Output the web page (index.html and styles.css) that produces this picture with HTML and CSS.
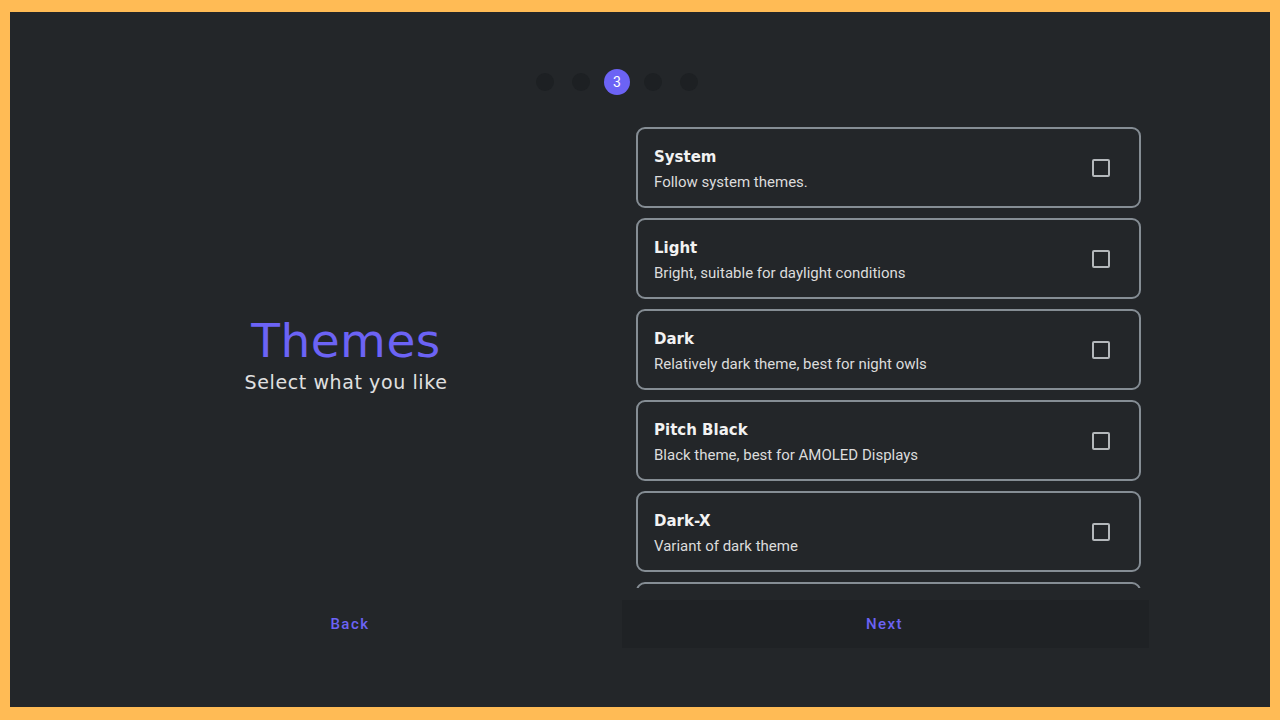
FILE: index.html
```html
<!DOCTYPE html>
<html lang="en">
<head>
  <meta charset="UTF-8">
  <meta name="viewport" content="width=device-width, initial-scale=1.0">
  <title>Themes</title>
  <link rel="stylesheet" href="styles.css">
</head>
<body>
  <div class="frame">
    <div class="steps">
      <span class="dot"></span>
      <span class="dot"></span>
      <span class="dot active">3</span>
      <span class="dot"></span>
      <span class="dot"></span>
    </div>

    <div class="content">
      <div class="intro">
        <h1 class="intro-title">Themes</h1>
        <p class="intro-sub">Select what you like</p>
      </div>

      <div class="theme-list">
        <div class="theme-card">
          <div class="theme-text">
            <div class="theme-name">System</div>
            <div class="theme-desc">Follow system themes.</div>
          </div>
          <span class="checkbox"></span>
        </div>
        <div class="theme-card">
          <div class="theme-text">
            <div class="theme-name">Light</div>
            <div class="theme-desc">Bright, suitable for daylight conditions</div>
          </div>
          <span class="checkbox"></span>
        </div>
        <div class="theme-card">
          <div class="theme-text">
            <div class="theme-name">Dark</div>
            <div class="theme-desc">Relatively dark theme, best for night owls</div>
          </div>
          <span class="checkbox"></span>
        </div>
        <div class="theme-card">
          <div class="theme-text">
            <div class="theme-name">Pitch Black</div>
            <div class="theme-desc">Black theme, best for AMOLED Displays</div>
          </div>
          <span class="checkbox"></span>
        </div>
        <div class="theme-card">
          <div class="theme-text">
            <div class="theme-name">Dark-X</div>
            <div class="theme-desc">Variant of dark theme</div>
          </div>
          <span class="checkbox"></span>
        </div>
        <!-- next card is scrolled out of view -->
        <div class="theme-card"></div>
      </div>
    </div>

    <div class="actions">
      <button class="btn btn-back">Back</button>
      <button class="btn btn-next">Next</button>
    </div>
  </div>
</body>
</html>
```

FILE: styles.css
```css
html,
body {
  margin: 0;
  height: 100%;
}

body {
  background-color: #ffbb55;
  padding: 12px 10px 13px 10px;
  box-sizing: border-box;
  font-family: Roboto, "Liberation Sans", sans-serif;
}

.frame {
  background-color: #232629;
  height: 100%;
  display: flex;
  flex-direction: column;
  overflow: hidden;
}

.steps {
  display: flex;
  justify-content: center;
  align-items: center;
  gap: 18px;
  padding-top: 57px;
  padding-right: 46px;
  height: 26px;
}

.dot {
  width: 18px;
  height: 18px;
  border-radius: 50%;
  background-color: #1d2023;
}

.dot.active {
  width: 26px;
  height: 26px;
  margin: 0 -4px;
  background-color: #6c63f5;
  color: #ffffff;
  font-size: 14px;
  display: flex;
  align-items: center;
  justify-content: center;
}

.content {
  display: flex;
  padding-top: 32px;
  height: 461px;
}

.intro {
  width: 552px;
  margin-left: 60px;
  display: flex;
  flex-direction: column;
  justify-content: center;
  align-items: center;
  padding-bottom: 10px;
}

.intro-title {
  margin: 0;
  font-family: "DejaVu Sans", sans-serif;
  font-weight: normal;
  font-size: 47px;
  color: #6c63f5;
  line-height: 56px;
  letter-spacing: 0.5px;
}

.intro-sub {
  margin: 2px 0 0 0;
  font-family: "DejaVu Sans", sans-serif;
  font-size: 19px;
  color: #e0e0e0;
  letter-spacing: 0.6px;
}

.theme-list {
  width: 505px;
  margin-left: 14px;
  display: flex;
  flex-direction: column;
  gap: 10px;
  overflow: hidden;
}

.theme-card {
  flex-shrink: 0;
  height: 81px;
  box-sizing: border-box;
  border: 2px solid #858d94;
  border-radius: 9px;
  display: flex;
  align-items: center;
  justify-content: space-between;
  padding: 3px 29px 0 16px;
}

.theme-name {
  font-family: "DejaVu Sans", sans-serif;
  font-weight: bold;
  font-size: 15px;
  color: #f2f2f2;
  line-height: 22px;
}

.theme-desc {
  font-size: 15px;
  color: #dcdcdc;
  line-height: 22px;
  margin-top: 3px;
}

.checkbox {
  width: 14px;
  height: 14px;
  margin-bottom: 3px;
  border: 2px solid #b4b8bb;
  border-radius: 2px;
}

.actions {
  display: flex;
  padding-left: 60px;
  margin-top: 12px;
}

.btn {
  border: none;
  background: none;
  font-family: Roboto, "Liberation Sans", sans-serif;
  font-weight: 500;
  font-size: 15px;
  letter-spacing: 1.5px;
  color: #6c63f5;
  height: 48px;
  cursor: pointer;
}

.btn-back {
  width: 552px;
  padding-left: 14px;
}

.btn-next {
  width: 527px;
  padding-left: 4px;
  background-color: #1f2225;
}
```
